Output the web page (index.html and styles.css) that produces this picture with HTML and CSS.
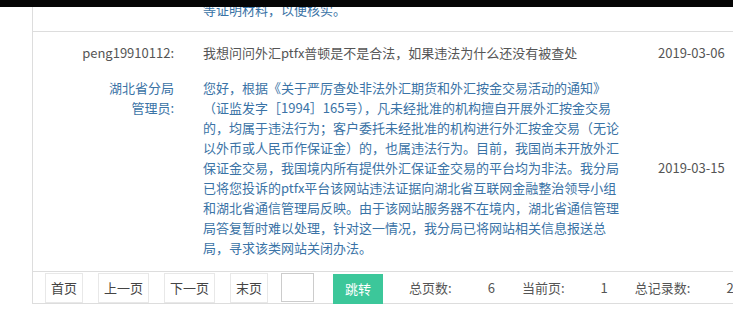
FILE: index.html
```
<!DOCTYPE html>
<html lang="zh-CN">
<head>
    <meta charset="UTF-8">
    <title>留言回复</title>
    <link rel="stylesheet" href="styles.css">
</head>
<body>
    <div class="topbar"></div>

    <div class="panel">
        <!-- Message list -->
        <div class="list">
            <div class="item item-cut">
                <div class="line">
                    <div class="who"></div>
                    <div class="text reply">等证明材料，以便核实。</div>
                </div>
            </div>

            <div class="item item-last">
                <div class="line">
                    <div class="who">peng19910112:</div>
                    <div class="text">我想问问外汇ptfx普顿是不是合法，如果违法为什么还没有被查处</div>
                    <div class="date">2019-03-06</div>
                </div>
                <div class="line line-reply">
                    <div class="who reply">湖北省分局<br>管理员:</div>
                    <div class="text reply">您好，根据《关于严厉查处非法外汇期货和外汇按金交易活动的通知》（证监发字［1994］165号），凡未经批准的机构擅自开展外汇按金交易的，均属于违法行为；客户委托未经批准的机构进行外汇按金交易（无论以外币或人民币作保证金）的，也属违法行为。目前，我国尚未开放外汇保证金交易，我国境内所有提供外汇保证金交易的平台均为非法。我分局已将您投诉的ptfx平台该网站违法证据向湖北省互联网金融整治领导小组和湖北省通信管理局反映。由于该网站服务器不在境内，湖北省通信管理局答复暂时难以处理，针对这一情况，我分局已将网站相关信息报送总局，寻求该类网站关闭办法。</div>
                    <div class="date">2019-03-15</div>
                </div>
            </div>
        </div>

        <!-- Pagination -->
        <div class="pager">
            <a class="pg-btn" href="#">首页</a>
            <a class="pg-btn" href="#">上一页</a>
            <a class="pg-btn" href="#">下一页</a>
            <a class="pg-btn" href="#">末页</a>
            <input class="pg-input" type="text">
            <button class="pg-go">跳转</button>
            <span class="stat">总页数:</span><span class="stat-val">6</span>
            <span class="stat">当前页:</span><span class="stat-val">1</span>
            <span class="stat">总记录数:</span><span class="stat-val">23</span>
        </div>
    </div>
</body>
</html>
```

FILE: styles.css
```
/* General */
body {
    margin: 0;
    overflow: hidden;
    background: #fff;
    color: #555;
    font-family: "Noto Sans CJK SC", "Noto Sans", sans-serif;
    font-size: 13px;
}

.topbar {
    height: 7px;
    background: #050505;
}

/* Panel with left rule */
.panel {
    margin-left: 32px;
    width: 820px;
    border-left: 1px solid #ddd;
}

.list {
    overflow: hidden;
}

.item {
    padding: 11px 0 13px;
    border-bottom: 1px solid #ddd;
}

.item-cut {
    margin-top: -7px;
    padding: 0 0 11px;
}

.item-last {
    border-bottom: none;
}

.line {
    display: flex;
    align-items: center;
    line-height: 20px;
}

.line-reply {
    margin-top: 15px;
}

.who {
    flex: none;
    align-self: flex-start;
    width: 100px;
    margin-left: 41px;
    text-align: right;
    white-space: nowrap;
}

.text {
    flex: none;
    width: 422px;
    margin-left: 29px;
}

.reply {
    color: #3a73a6;
}

.date {
    margin-left: 33px;
    white-space: nowrap;
}

/* Pagination */
.pager {
    display: flex;
    align-items: center;
    height: 31px;
    padding-left: 12px;
    border-top: 1px solid #ddd;
    border-bottom: 1px solid #ddd;
    white-space: nowrap;
}

.pg-btn {
    height: 28px;
    line-height: 28px;
    padding: 0 5px;
    margin-right: 15px;
    border: 1px solid #e8e8e8;
    color: #444;
    text-decoration: none;
}

.pg-input {
    width: 31px;
    height: 27px;
    padding: 0;
    margin: 0 19px 0 -2px;
    border: 1px solid #ccc;
}

.pg-go {
    width: 50px;
    height: 30px;
    margin-top: 2px;
    margin-right: 26px;
    border: none;
    background: #3cc79a;
    color: #fff;
    font-family: inherit;
    font-size: 13px;
}

.stat {
    color: #555;
}

.stat-val {
    padding: 0 27px 0 36px;
    color: #555;
}
```
